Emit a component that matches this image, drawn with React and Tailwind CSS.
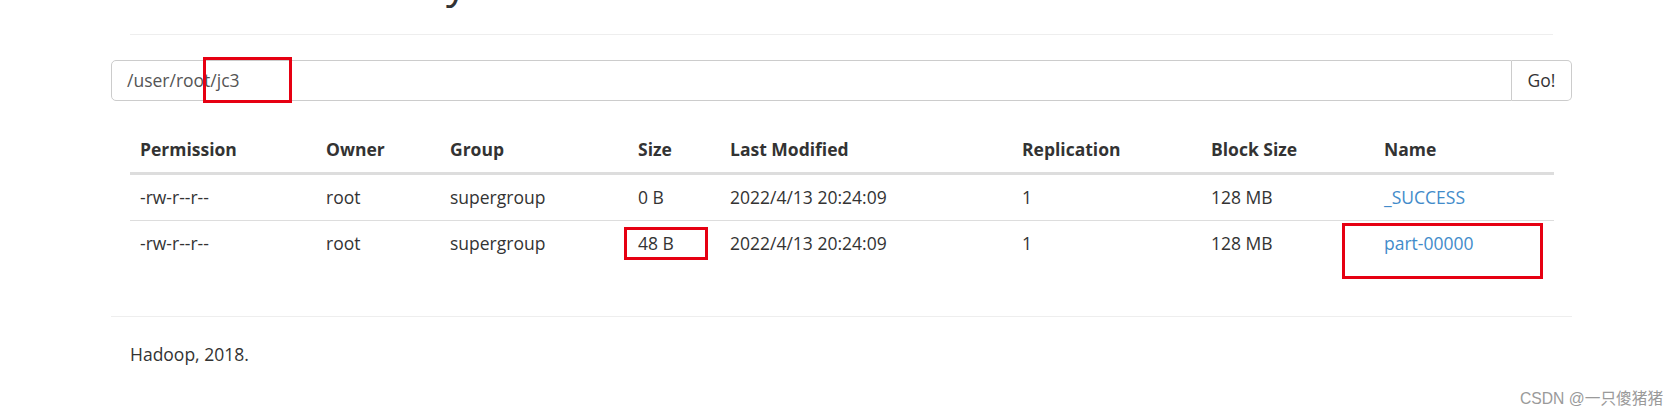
import React from 'react';

const columns = [
    { label: 'Permission', width: 'w-[186px]' },
    { label: 'Owner', width: 'w-[124px]' },
    { label: 'Group', width: 'w-[188px]' },
    { label: 'Size', width: 'w-[92px]' },
    { label: 'Last Modified', width: 'w-[292px]' },
    { label: 'Replication', width: 'w-[189px]' },
    { label: 'Block Size', width: 'w-[173px]' },
    { label: 'Name', width: 'w-[180px]' },
];

const files = [
    { permission: '-rw-r--r--', owner: 'root', group: 'supergroup', size: '0 B', modified: '2022/4/13 20:24:09', replication: '1', blockSize: '128 MB', name: '_SUCCESS' },
    { permission: '-rw-r--r--', owner: 'root', group: 'supergroup', size: '48 B', modified: '2022/4/13 20:24:09', replication: '1', blockSize: '128 MB', name: 'part-00000' },
];

const App = () => {
    return (
        <div className="relative min-h-[418px] overflow-hidden bg-white pl-[111px] font-['Open_Sans','Noto_Sans',sans-serif] text-[17.5px] leading-[25px] text-[#333]">
            <div className="w-[1461px]">
                {/* Page header (scrolled, only the tail shows) */}
                <div className="mx-[19px] mb-[25px] border-b border-[#eee] pb-[30px]">
                    <h1 className="mt-[-41px] text-[42px] font-medium leading-[45px] text-[#333]">Browse Directory</h1>
                </div>

                {/* Path input */}
                <div className="flex h-[41px]">
                    <div className="flex flex-1 items-center rounded-l-[5px] border border-[#ccc] px-[15px] text-[#555]">
                        /user/root/jc3
                    </div>
                    <button className="flex w-[60px] items-center justify-center rounded-r-[5px] border-y border-r border-[#ccc] bg-white text-[#333]">
                        Go!
                    </button>
                </div>

                {/* Listing */}
                <div className="mt-[26px] px-[19px]">
                    <table className="w-full table-fixed border-collapse text-left">
                        <colgroup>
                            {columns.map((c) => (
                                <col key={c.label} className={c.width} />
                            ))}
                        </colgroup>
                        <thead>
                            <tr className="border-b-[3px] border-[#ddd]">
                                {columns.map((c) => (
                                    <th key={c.label} className="p-[10px] font-bold">{c.label}</th>
                                ))}
                            </tr>
                        </thead>
                        <tbody>
                            {files.map((f, i) => (
                                <tr key={f.name} className={i > 0 ? 'border-t border-[#ddd]' : ''}>
                                    <td className="p-[10px]">{f.permission}</td>
                                    <td className="p-[10px]">{f.owner}</td>
                                    <td className="p-[10px]">{f.group}</td>
                                    <td className="p-[10px]">{f.size}</td>
                                    <td className="p-[10px]">{f.modified}</td>
                                    <td className="p-[10px]">{f.replication}</td>
                                    <td className="p-[10px]">{f.blockSize}</td>
                                    <td className="p-[10px]">
                                        <a href="#" className="text-[#428bca]">{f.name}</a>
                                    </td>
                                </tr>
                            ))}
                        </tbody>
                    </table>
                </div>

                {/* Footer */}
                <hr className="mt-[50px] border-t border-[#eee]" />
                <p className="mt-[25px] px-[19px]">Hadoop, 2018.</p>
            </div>

            {/* Red annotation boxes */}
            <div className="absolute left-[203px] top-[57px] h-[46px] w-[89px] border-[3px] border-[#e60012]" />
            <div className="absolute left-[624px] top-[227px] h-[33px] w-[84px] border-[3px] border-[#e60012]" />
            <div className="absolute left-[1342px] top-[223px] h-[56px] w-[201px] border-[3px] border-[#e60012]" />

            {/* Watermark */}
            <div className="absolute left-[1520px] top-[389px] font-['Liberation_Sans','Noto_Sans_CJK_SC',sans-serif] text-[15.7px] leading-[20px] text-[#9a9a9a]">
                CSDN @一只傻猪猪
            </div>
        </div>
    );
};

export default App;
